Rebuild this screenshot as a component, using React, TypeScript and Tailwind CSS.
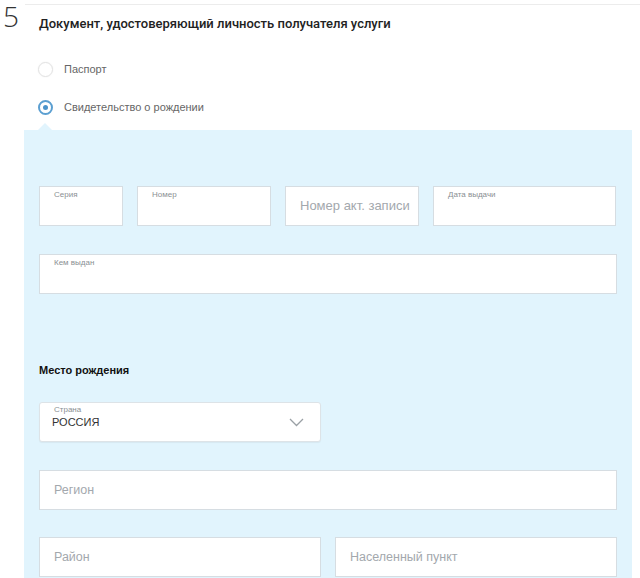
import React from "react";

const sans = { fontFamily: '"Liberation Sans", Arial, sans-serif' };

function SmallField({ label, w }: { label: string; w: string }) {
  return (
    <div className={`${w} h-[40px] bg-white border border-[#d6dde2] pl-[14px] pt-[2px]`}>
      <div className="text-[8px] leading-[12px] text-[#8a8f93]">{label}</div>
    </div>
  );
}

function PlaceholderField({ text, w, size }: { text: string; w: string; size: string }) {
  return (
    <div className={`${w} h-[40px] bg-white border border-[#d6dde2] pl-[14px] flex items-center`}>
      <span className={`${size} whitespace-nowrap text-[#a3a8ad]`}>{text}</span>
    </div>
  );
}

export default function App() {
  return (
    <div className="w-[640px] h-[578px] overflow-hidden bg-white relative" style={sans}>
      {/* header */}
      <div className="flex items-start">
        <div className="w-[25px] shrink-0 pl-[3px] text-[28px] leading-[33px] font-light text-[#333] whitespace-nowrap" style={{ fontFamily: '"Open Sans", sans-serif' }}>
          5
        </div>
        <div className="flex-1 mt-[4px] border-t border-[#ececec] pl-[14px] pt-[10px]">
          <div className="text-[13px] leading-[18px] font-medium text-[#222]" style={{ fontFamily: 'Roboto, sans-serif' }}>
            Документ, удостоверяющий личность получателя услуги
          </div>
        </div>
      </div>

      {/* radios */}
      <div className="pl-[38px] pt-[29px] flex flex-col gap-[23px]">
        <div className="flex items-center h-[15px]">
          <div className="w-[15px] h-[15px] rounded-full border border-[#e2e2e2] bg-white shadow-[0_0_2px_rgba(0,0,0,0.06)]" />
          <span className="ml-[11px] text-[11px] text-[#666]">Паспорт</span>
        </div>
        <div className="flex items-center h-[15px]">
          <div className="w-[15px] h-[15px] rounded-full border-[2px] border-[#5b9fd1] bg-white flex items-center justify-center">
            <div className="w-[5px] h-[5px] rounded-full bg-[#4b93ca]" />
          </div>
          <span className="ml-[11px] text-[11px] text-[#666]">Свидетельство о рождении</span>
        </div>
      </div>

      {/* panel */}
      <div className="relative mt-[15px] ml-[24px] w-[608px] bg-[#e1f4fd] px-[15px] pt-[56px] pb-[20px]">
        <div className="absolute left-[14px] -top-[7px] w-0 h-0 border-l-[7px] border-r-[7px] border-b-[7px] border-l-transparent border-r-transparent border-b-[#e1f4fd]" />
        <div className="flex gap-[14px]">
          <SmallField label="Серия" w="w-[84px]" />
          <SmallField label="Номер" w="w-[134px]" />
          <PlaceholderField text="Номер акт. записи" w="w-[134px]" size="text-[13px]" />
          <SmallField label="Дата выдачи" w="w-[183px]" />
        </div>
        <div className="mt-[28px]">
          <SmallField label="Кем выдан" w="w-full" />
        </div>

        <div className="mt-[69px] text-[11px] leading-[14px] font-bold text-[#111]">Место рождения</div>

        <div className="mt-[25px] w-[282px] h-[40px] bg-white border border-[#dde3e7] rounded-[3px] shadow-[0_1px_1px_rgba(0,0,0,0.05)] flex items-start pl-[12px] pr-[16px] pt-[2px]">
          <div className="flex-1">
            <div className="text-[8px] leading-[10px] text-[#8a8f93] pl-[2px]">Страна</div>
            <div className="text-[11px] leading-[14px] text-[#333]">РОССИЯ</div>
          </div>
          <svg className="self-center -mt-[2px]" width="15" height="9" viewBox="0 0 15 9" fill="none">
            <path d="M1 1l6.5 6.5L14 1" stroke="#9aa0a5" strokeWidth="1.3" />
          </svg>
        </div>

        <div className="mt-[28px]">
          <PlaceholderField text="Регион" w="w-full" size="text-[12.5px]" />
        </div>
        <div className="mt-[27px] flex gap-[14px]">
          <PlaceholderField text="Район" w="w-[282px]" size="text-[12.5px]" />
          <PlaceholderField text="Населенный пункт" w="w-[282px]" size="text-[12.5px]" />
        </div>
      </div>
    </div>
  );
}
